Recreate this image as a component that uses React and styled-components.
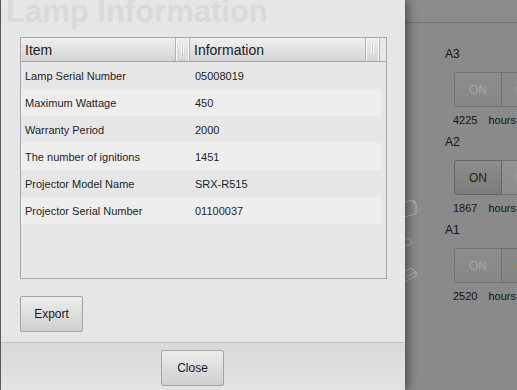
import styled, { createGlobalStyle } from "styled-components";

const rows = [
  ["Lamp Serial Number", "05008019"],
  ["Maximum Wattage", "450"],
  ["Warranty Period", "2000"],
  ["The number of ignitions", "1451"],
  ["Projector Model Name", "SRX-R515"],
  ["Projector Serial Number", "01100037"],
];

const lamps = [
  { name: "A3", hours: "4225", on: "off", second: "dim" },
  { name: "A2", hours: "1867", on: "active", second: "light" },
  { name: "A1", hours: "2520", on: "off", second: "warn" },
];

export default function App() {
  return (
    <>
      <GlobalStyle />
      <Screen>
        <LeftEdge />
        <Dialog>
          <TitleBox>
            <Title>Lamp Information</Title>
          </TitleBox>
          <Table>
            <HeaderRow>
              <HeaderCell>Item</HeaderCell>
              <Grip />
              <HeaderCell>Information</HeaderCell>
              <Grip />
              <HeaderRest />
            </HeaderRow>
            <Body>
              {rows.map(([item, info], i) => (
                <Row key={item} $alt={i % 2 === 1}>
                  <Cell>{item}</Cell>
                  <Cell>{info}</Cell>
                </Row>
              ))}
            </Body>
          </Table>
          <ExportBar>
            <Button>Export</Button>
          </ExportBar>
          <Footer>
            <Button>Close</Button>
          </Footer>
        </Dialog>
        <Backdrop>
          <TopBar />
          <BackdropBody>
            <IconStrip>
              <svg width="14" height="18" viewBox="0 0 14 18">
                <path d="M-4 4 L8 1 L11 4 L11 15 L-1 18" fill="none" stroke="#b4b4b4" strokeWidth="1" />
                <path d="M8 1 L8 4 L11 4" fill="none" stroke="#b4b4b4" strokeWidth="1" />
              </svg>
              <svg width="14" height="10" viewBox="0 0 14 10">
                <path d="M-2 2 Q6 1 7 5 Q6 9 -2 8" fill="none" stroke="#b4b4b4" strokeWidth="1" />
              </svg>
              <svg width="14" height="16" viewBox="0 0 14 16">
                <path d="M-4 6 L6 1 L11 5 L11 9 L1 14 L-4 12" fill="none" stroke="#b4b4b4" strokeWidth="1" />
                <path d="M1 10 L11 5" fill="none" stroke="#b4b4b4" strokeWidth="1" />
              </svg>
            </IconStrip>
            <Lamps>
              {lamps.map((l) => (
                <Lamp key={l.name}>
                  <LampLabel>{l.name}</LampLabel>
                  <Toggle>
                    <Segment $state={l.on}>ON</Segment>
                    <Segment $state={l.second}>OFF</Segment>
                  </Toggle>
                  <Hours>
                    <span>{l.hours}</span>
                    <span>hours</span>
                  </Hours>
                </Lamp>
              ))}
            </Lamps>
          </BackdropBody>
        </Backdrop>
      </Screen>
    </>
  );
}

const GlobalStyle = createGlobalStyle`
  html, body {
    margin: 0;
    padding: 0;
    overflow: hidden;
  }
  body {
    font-family: "Liberation Sans", Arial, sans-serif;
  }
`;

const Screen = styled.div`
  display: flex;
  width: 517px;
  height: 390px;
  overflow: hidden;
  background: #8a8a8a;
`;

const LeftEdge = styled.div`
  width: 1px;
  flex-shrink: 0;
  background: #626262;
`;

const Dialog = styled.div`
  position: relative;
  z-index: 1;
  width: 404px;
  flex-shrink: 0;
  display: flex;
  flex-direction: column;
  background: #e6e6e6;
  box-shadow: 3px 0 9px rgba(0, 0, 0, 0.45);
`;

const TitleBox = styled.div`
  height: 37px;
  overflow: hidden;
  padding-left: 5px;
`;

const Title = styled.div`
  margin-top: -4px;
  font-size: 31px;
  line-height: 31px;
  font-weight: bold;
  color: #d9d9d9;
  white-space: nowrap;
`;

const Table = styled.div`
  box-sizing: border-box;
  width: 367px;
  height: 242px;
  margin-left: 19px;
  border: 1px solid #a6a6a6;
  background: #e6e6e6;
  display: flex;
  flex-direction: column;
`;

const HeaderRow = styled.div`
  display: grid;
  grid-template-columns: 154px 15px 175px 15px 1fr;
  height: 24px;
  box-sizing: border-box;
  border-bottom: 1px solid #a2a2a2;
`;

const HeaderCell = styled.div`
  display: flex;
  align-items: center;
  padding-left: 4px;
  font-size: 14px;
  color: #1a1a1a;
  background: linear-gradient(#f0f0f0, #d4d4d4);
`;

const Grip = styled.div`
  position: relative;
  background: linear-gradient(#f0f0f0, #d4d4d4);
  border-left: 1px solid #b4b4b4;
  border-right: 1px solid #b4b4b4;
  box-shadow: inset 1px 0 0 #fafafa, inset -1px 0 0 #fafafa;

  &::after {
    content: "";
    position: absolute;
    left: 5px;
    top: 7px;
    width: 1px;
    height: 9px;
    border-left: 1px solid #fcfcfc;
    border-right: 1px solid #fcfcfc;
    background: #c4c4c4;
  }
`;

const HeaderRest = styled.div`
  background: #e8e8e8;
`;

const Body = styled.div`
  padding-right: 4px;
`;

const Row = styled.div`
  display: grid;
  grid-template-columns: 170px 1fr;
  align-items: center;
  height: 27px;
  background: ${(p) => (p.$alt ? "#eeeeee" : "transparent")};
`;

const Cell = styled.div`
  padding-left: 4px;
  font-size: 11px;
  color: #1e1e1e;
`;

const ExportBar = styled.div`
  padding: 17px 0 0 19px;
  height: 46px;
`;

const Button = styled.button`
  width: 63px;
  height: 36px;
  box-sizing: border-box;
  border: 1px solid #a4a4a4;
  border-radius: 2px;
  background: linear-gradient(#ececec, #cfcfcf);
  font-family: "Liberation Sans", Arial, sans-serif;
  font-size: 12px;
  color: #1a1a1a;
  padding: 0;
`;

const Footer = styled.div`
  margin-top: auto;
  height: 48px;
  box-sizing: border-box;
  border-top: 1px solid #c2c2c2;
  padding: 7px 0 0 160px;
  background: linear-gradient(#d9d9d9, #e4e4e4);
`;

const Backdrop = styled.div`
  flex: 1;
  display: flex;
  flex-direction: column;
  background: #8a8a8a;
`;

const TopBar = styled.div`
  height: 22px;
  border-bottom: 1px solid #707070;
  background: #8c8c8c;
`;

const BackdropBody = styled.div`
  display: flex;
`;

const IconStrip = styled.div`
  width: 14px;
  display: flex;
  flex-direction: column;
  padding-top: 176px;
  gap: 20px;
  overflow: hidden;

  svg {
    display: block;
  }
`;

const Lamps = styled.div`
  padding: 23px 0 0 26px;
  display: flex;
  flex-direction: column;
`;

const Lamp = styled.div`
  display: flex;
  flex-direction: column;
  padding-bottom: 6px;
`;

const LampLabel = styled.div`
  height: 16px;
  line-height: 16px;
  font-size: 12px;
  color: #141414;
`;

const Toggle = styled.div`
  display: flex;
  margin: 10px 0 0 9px;
  height: 35px;
`;

const segmentLook = {
  off: "background: linear-gradient(#8d8d8d, #878787); color: #a6a6a6; border-color: #727272;",
  active: "background: linear-gradient(#8e8e8e, #7b7b7b); color: #1e1e1e; border-color: #666666;",
  dim: "background: #898989; color: #a0a0a0; border-color: #727272;",
  light: "background: linear-gradient(#939393, #8c8c8c); color: #a4a4a4; border-color: #707070;",
  warn: "background: linear-gradient(#8a8a8a, #858585); color: #b88030; border-color: #6c6c6c;",
};

const Segment = styled.div`
  width: 48px;
  flex-shrink: 0;
  box-sizing: border-box;
  display: flex;
  align-items: center;
  justify-content: center;
  border: 1px solid;
  font-size: 12px;
  ${(p) => segmentLook[p.$state]}

  &:first-child {
    border-radius: 3px 0 0 3px;
  }
  &:last-child {
    width: 52px;
    justify-content: flex-start;
    padding-left: 13px;
    border-left: none;
    border-radius: 0 3px 3px 0;
  }
`;

const Hours = styled.div`
  display: flex;
  gap: 11px;
  margin: 5px 0 0 8px;
  height: 16px;
  line-height: 16px;
  font-size: 11px;
  color: #141414;
  white-space: nowrap;
`;
